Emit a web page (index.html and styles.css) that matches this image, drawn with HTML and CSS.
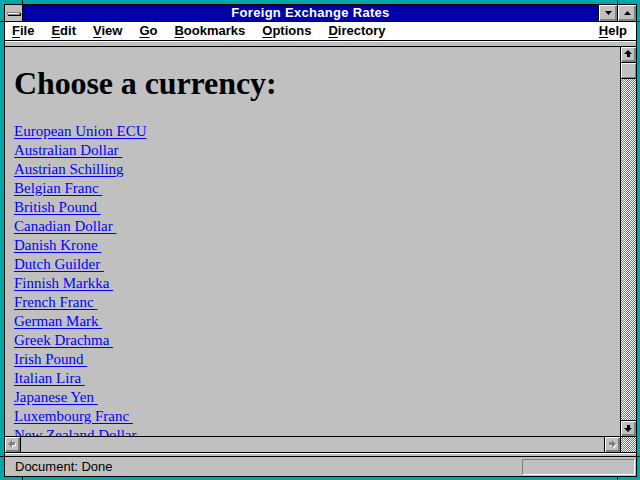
FILE: index.html
```html
<!DOCTYPE html>
<html lang="en">
<head>
    <meta charset="UTF-8">
    <title>Foreign Exchange Rates</title>
    <link rel="stylesheet" href="styles.css">
</head>
<body>
<div class="window">
    <div class="frame">
        <div class="titlebar">
            <div class="sysmenu"><span class="sysbar"></span></div>
            <div class="title">Foreign Exchange Rates</div>
            <div class="tbtn">
                <svg width="7" height="4" viewBox="0 0 7 4"><path d="M0 0H7L3.5 4Z" fill="#000"/></svg>
            </div>
            <div class="tbtn">
                <svg width="7" height="4" viewBox="0 0 7 4"><path d="M0 4H7L3.5 0Z" fill="#000"/></svg>
            </div>
        </div>

        <div class="menubar">
            <span class="menu"><u>F</u>ile</span>
            <span class="menu"><u>E</u>dit</span>
            <span class="menu"><u>V</u>iew</span>
            <span class="menu"><u>G</u>o</span>
            <span class="menu"><u>B</u>ookmarks</span>
            <span class="menu"><u>O</u>ptions</span>
            <span class="menu"><u>D</u>irectory</span>
            <span class="menu help"><u>H</u>elp</span>
        </div>
        <div class="strip"></div>

        <div class="main">
            <div class="viewport">
                <h1>Choose a currency:</h1>
                <a href="#">European Union ECU</a>
                <a href="#">Australian Dollar&nbsp;</a>
                <a href="#">Austrian Schilling</a>
                <a href="#">Belgian Franc&nbsp;</a>
                <a href="#">British Pound&nbsp;</a>
                <a href="#">Canadian Dollar&nbsp;</a>
                <a href="#">Danish Krone&nbsp;</a>
                <a href="#">Dutch Guilder&nbsp;</a>
                <a href="#">Finnish Markka&nbsp;</a>
                <a href="#">French Franc&nbsp;</a>
                <a href="#">German Mark&nbsp;</a>
                <a href="#">Greek Drachma&nbsp;</a>
                <a href="#">Irish Pound&nbsp;</a>
                <a href="#">Italian Lira&nbsp;</a>
                <a href="#">Japanese Yen&nbsp;</a>
                <a href="#">Luxembourg Franc&nbsp;</a>
                <a href="#">New Zealand Dollar&nbsp;</a>
            </div>
            <div class="vscroll">
                <div class="sbtn up">
                    <svg width="15" height="15" viewBox="0 0 15 15"><path d="M7 3L11 7H9V10H6V7H3Z" fill="#000"/></svg>
                </div>
                <div class="thumb"></div>
                <div class="track"></div>
                <div class="sbtn down">
                    <svg width="15" height="15" viewBox="0 0 15 15"><path d="M7 11L11 7H9V4H6V7H3Z" fill="#000"/></svg>
                </div>
            </div>
        </div>

        <div class="hscroll">
            <div class="sbtn">
                <svg width="15" height="15" viewBox="0 0 15 15">
                    <path d="M4 8L8 4V6H11V9H8V12Z" fill="#fff"/>
                    <path d="M3 7L7 3V5H10V8H7V11Z" fill="#808080"/>
                </svg>
            </div>
            <div class="htrack"></div>
            <div class="sbtn">
                <svg width="15" height="15" viewBox="0 0 15 15">
                    <path d="M12 8L8 4V6H5V9H8V12Z" fill="#fff"/>
                    <path d="M11 7L7 3V5H4V8H7V11Z" fill="#808080"/>
                </svg>
            </div>
            <div class="corner"></div>
        </div>
        <div class="strip lower"></div>

        <div class="status">
            <span class="status-text">Document: Done</span>
            <div class="progress"></div>
        </div>
    </div>

    <span class="notch v left-top"></span>
    <span class="notch v right-top"></span>
    <span class="notch v left-bottom"></span>
    <span class="notch v right-bottom"></span>
    <span class="notch h top-left"></span>
    <span class="notch h top-right"></span>
    <span class="notch h bottom-left"></span>
    <span class="notch h bottom-right"></span>
</div>
</body>
</html>
```

FILE: styles.css
```css
* {
    box-sizing: border-box;
    margin: 0;
    padding: 0;
}

body {
    background-color: #00a8a8;
    font-family: "Liberation Sans", Arial, sans-serif;
}

.window {
    position: relative;
    width: 640px;
    height: 480px;
    padding: 4px 3px 3px 4px;
    background-color: #00a8a8;
    overflow: hidden;
}

.frame {
    height: 100%;
    border: 1px solid #000;
    background-color: #c0c0c0;
    display: flex;
    flex-direction: column;
}

/* title bar */
.titlebar {
    display: flex;
    height: 17px;
    border-bottom: 1px solid #000;
}

.sysmenu {
    width: 18px;
    border-right: 1px solid #000;
    background-color: #c0c0c0;
    display: flex;
    align-items: center;
    justify-content: center;
}

.sysbar {
    width: 13px;
    height: 3px;
    background-color: #fff;
    border: 1px solid #808080;
    box-shadow: 1px 1px 0 #000;
}

.title {
    flex: 1;
    background-color: #0000a8;
    color: #fff;
    font-weight: bold;
    font-size: 13px;
    letter-spacing: 0.3px;
    line-height: 16px;
    text-align: center;
}

.tbtn {
    width: 19px;
    border-left: 1px solid #000;
    background-color: #c0c0c0;
    box-shadow: inset 1px 1px 0 #fff, inset -1px -1px 0 #808080, inset -2px -2px 0 #808080;
    display: flex;
    align-items: center;
    justify-content: center;
}

/* menu bar */
.menubar {
    display: flex;
    height: 19px;
    background-color: #fff;
    border-bottom: 1px solid #000;
    font-size: 13px;
    font-weight: bold;
    line-height: 18px;
}

.menu {
    padding: 0 7px;
    margin-right: 3px;
}

.menu u {
    text-underline-offset: 2px;
}

.menu.help {
    margin-left: auto;
    margin-right: 2px;
}

.strip {
    height: 6px;
    border-top: 1px solid #fff;
    border-bottom: 1px solid #000;
    background-color: #c0c0c0;
}

.strip.lower {
    height: 4px;
}

/* page area */
.main {
    flex: 1;
    display: flex;
    min-height: 0;
}

.viewport {
    flex: 1;
    overflow: hidden;
    padding-left: 9px;
    background-color: #c0c0c0;
}

h1 {
    font-family: "Liberation Serif", "Times New Roman", serif;
    font-size: 32px;
    line-height: 37px;
    font-weight: bold;
    color: #000;
    margin: 18px 0 20px;
    letter-spacing: -0.1px;
}

.viewport a {
    display: block;
    width: max-content;
    font-family: "Liberation Serif", "Times New Roman", serif;
    font-size: 15px;
    line-height: 19px;
    color: #0000ff;
    text-underline-offset: 2px;
}

/* scroll bars */
.vscroll {
    width: 16px;
    border-left: 1px solid #000;
    display: flex;
    flex-direction: column;
}

.sbtn {
    width: 15px;
    height: 15px;
    background-color: #c0c0c0;
    box-shadow: inset 1px 1px 0 #fff, inset -1px -1px 0 #808080, inset -2px -2px 0 #808080;
}

.sbtn svg {
    display: block;
}

.vscroll .up {
    height: 16px;
    border-bottom: 1px solid #000;
}

.vscroll .down {
    height: 16px;
    border-top: 1px solid #000;
}

.thumb {
    height: 16px;
    border-bottom: 1px solid #000;
    background-color: #c0c0c0;
    box-shadow: inset 1px 1px 0 #fff, inset -1px -1px 0 #808080;
}

.track,
.corner {
    background: repeating-conic-gradient(#00a8a8 0 25%, #fff 0 50%) 0 0 / 2px 2px;
}

.track {
    flex: 1;
}

.hscroll {
    display: flex;
    height: 17px;
    border-top: 1px solid #000;
    border-bottom: 1px solid #000;
}

.htrack {
    flex: 1;
    border-left: 1px solid #000;
    border-right: 1px solid #000;
    background-color: #c0c0c0;
}

.corner {
    width: 16px;
    border-left: 1px solid #000;
}

/* status bar */
.status {
    flex: 0 0 19px;
    display: flex;
    align-items: center;
    justify-content: space-between;
    padding-left: 10px;
    font-size: 13px;
    color: #000;
}

.progress {
    width: 113px;
    height: 16px;
    margin-right: 1px;
    margin-top: 1px;
    border-top: 1px solid #808080;
    border-left: 1px solid #808080;
    border-bottom: 1px solid #fff;
    border-right: 1px solid #fff;
}

/* frame corner notches */
.notch {
    position: absolute;
    background-color: #000;
}

.notch.v {
    width: 1px;
    height: 5px;
}

.notch.h {
    width: 5px;
    height: 1px;
}

.left-top { left: 22px; top: 0; }
.right-top { left: 617px; top: 0; }
.left-bottom { left: 22px; top: 476px; }
.right-bottom { left: 617px; top: 476px; }
.top-left { left: 0; top: 21px; }
.top-right { left: 636px; top: 21px; }
.bottom-left { left: 0; top: 456px; }
.bottom-right { left: 636px; top: 456px; }
```
